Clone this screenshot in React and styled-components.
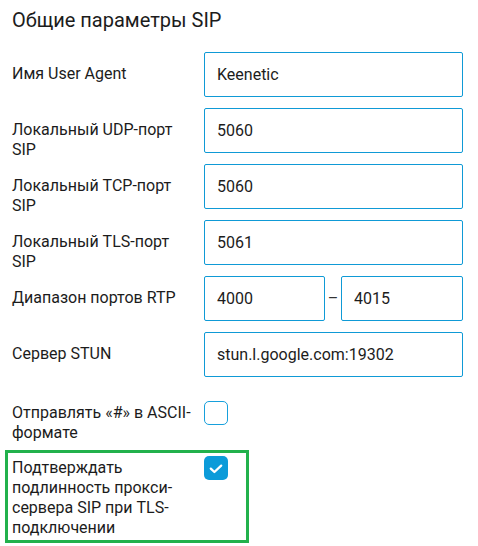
import React from "react";
import styled, { createGlobalStyle } from "styled-components";

const Global = createGlobalStyle`
  html, body { margin: 0; padding: 0; background: #fff; }
  body { font-family: Roboto, "Noto Sans", Arial, sans-serif; color: #1c1c1c; }
  * { box-sizing: border-box; }
`;

const Page = styled.div`
  width: 478px;
  padding: 8px 12px 0 12px;
`;

const Title = styled.h2`
  margin: 0;
  font-size: 20px;
  line-height: 24px;
  font-weight: 400;
  color: #1c1c1c;
`;

const Form = styled.div`
  margin-top: 20px;
  display: flex;
  flex-direction: column;
  gap: 11px;
`;

const Row = styled.div`
  display: grid;
  grid-template-columns: 192px 259px;
  align-items: start;
  height: 45px;
`;

const Label = styled.div`
  padding: ${(p) => (p.$check ? "2px" : "12px")} 6px 0 0;
  font-size: 16px;
  line-height: 20px;
  color: #1c1c1c;
  white-space: nowrap;
`;

const Input = styled.input`
  display: block;
  width: 100%;
  height: 45px;
  padding: 0 12px;
  border: 1px solid #0f9ad6;
  border-radius: 2px;
  font-family: Roboto, "Noto Sans", Arial, sans-serif;
  font-size: 16px;
  color: #1c1c1c;
  background: #fff;
  outline: none;
`;

const Range = styled.div`
  display: flex;
  align-items: center;
`;

const RangeInput = styled(Input)`
  flex: 0 0 ${(p) => p.$w}px;
  width: ${(p) => p.$w}px;
`;

const Dash = styled.span`
  flex: 0 0 16px;
  text-align: center;
  font-size: 16px;
  color: #333;
`;

const CheckRow = styled.div`
  display: grid;
  grid-template-columns: 192px 24px;
  align-items: start;
  margin-top: 13px;
`;

const Highlight = styled.div`
  margin: -4px 0 0 -7px;
  width: 244px;
  padding: 3px 0 2px 4px;
  border: 3px solid #22b14c;
  display: grid;
  grid-template-columns: 192px 24px;
  align-items: start;
`;

const Box = styled.div`
  width: 24px;
  height: 24px;
  border-radius: 5px;
  border: ${(p) => (p.$checked ? "none" : "1.5px solid #17a0dc")};
  background: ${(p) => (p.$checked ? "#0c9bd9" : "#fff")};
  display: flex;
  align-items: center;
  justify-content: center;
`;

function Checkbox({ checked }) {
  return (
    <Box $checked={checked}>
      {checked && (
        <svg width="24" height="24" viewBox="0 0 24 24">
          <polyline
            points="6.8,12.6 10.4,16 17.2,9.6"
            fill="none"
            stroke="#fff"
            strokeWidth="2.3"
            strokeLinecap="round"
            strokeLinejoin="round"
          />
        </svg>
      )}
    </Box>
  );
}

function Lines({ lines, check }) {
  return (
    <Label $check={check}>
      {lines.map((l, i) => (
        <React.Fragment key={i}>
          {i > 0 && <br />}
          {l}
        </React.Fragment>
      ))}
    </Label>
  );
}

const fields = [
  [["Имя User Agent"], "Keenetic"],
  [["Локальный UDP-порт", "SIP"], "5060"],
  [["Локальный TCP-порт", "SIP"], "5060"],
  [["Локальный TLS-порт", "SIP"], "5061"],
];

export default function App() {
  return (
    <>
      <Global />
      <Page>
        <Title>Общие параметры SIP</Title>
        <Form>
          {fields.map(([lines, value], i) => (
            <Row key={i}>
              <Lines lines={lines} />
              <Input defaultValue={value} />
            </Row>
          ))}
          <Row>
            <Lines lines={["Диапазон портов RTP"]} />
            <Range>
              <RangeInput $w={121} defaultValue="4000" />
              <Dash>–</Dash>
              <RangeInput $w={122} defaultValue="4015" />
            </Range>
          </Row>
          <Row>
            <Lines lines={["Сервер STUN"]} />
            <Input defaultValue="stun.l.google.com:19302" />
          </Row>
          <CheckRow>
            <Lines check lines={["Отправлять «#» в ASCII-", "формате"]} />
            <Checkbox />
          </CheckRow>
          <Highlight>
            <Lines
              check
              lines={[
                "Подтверждать",
                "подлинность прокси-",
                "сервера SIP при TLS-",
                "подключении",
              ]}
            />
            <Checkbox checked />
          </Highlight>
        </Form>
      </Page>
    </>
  );
}
